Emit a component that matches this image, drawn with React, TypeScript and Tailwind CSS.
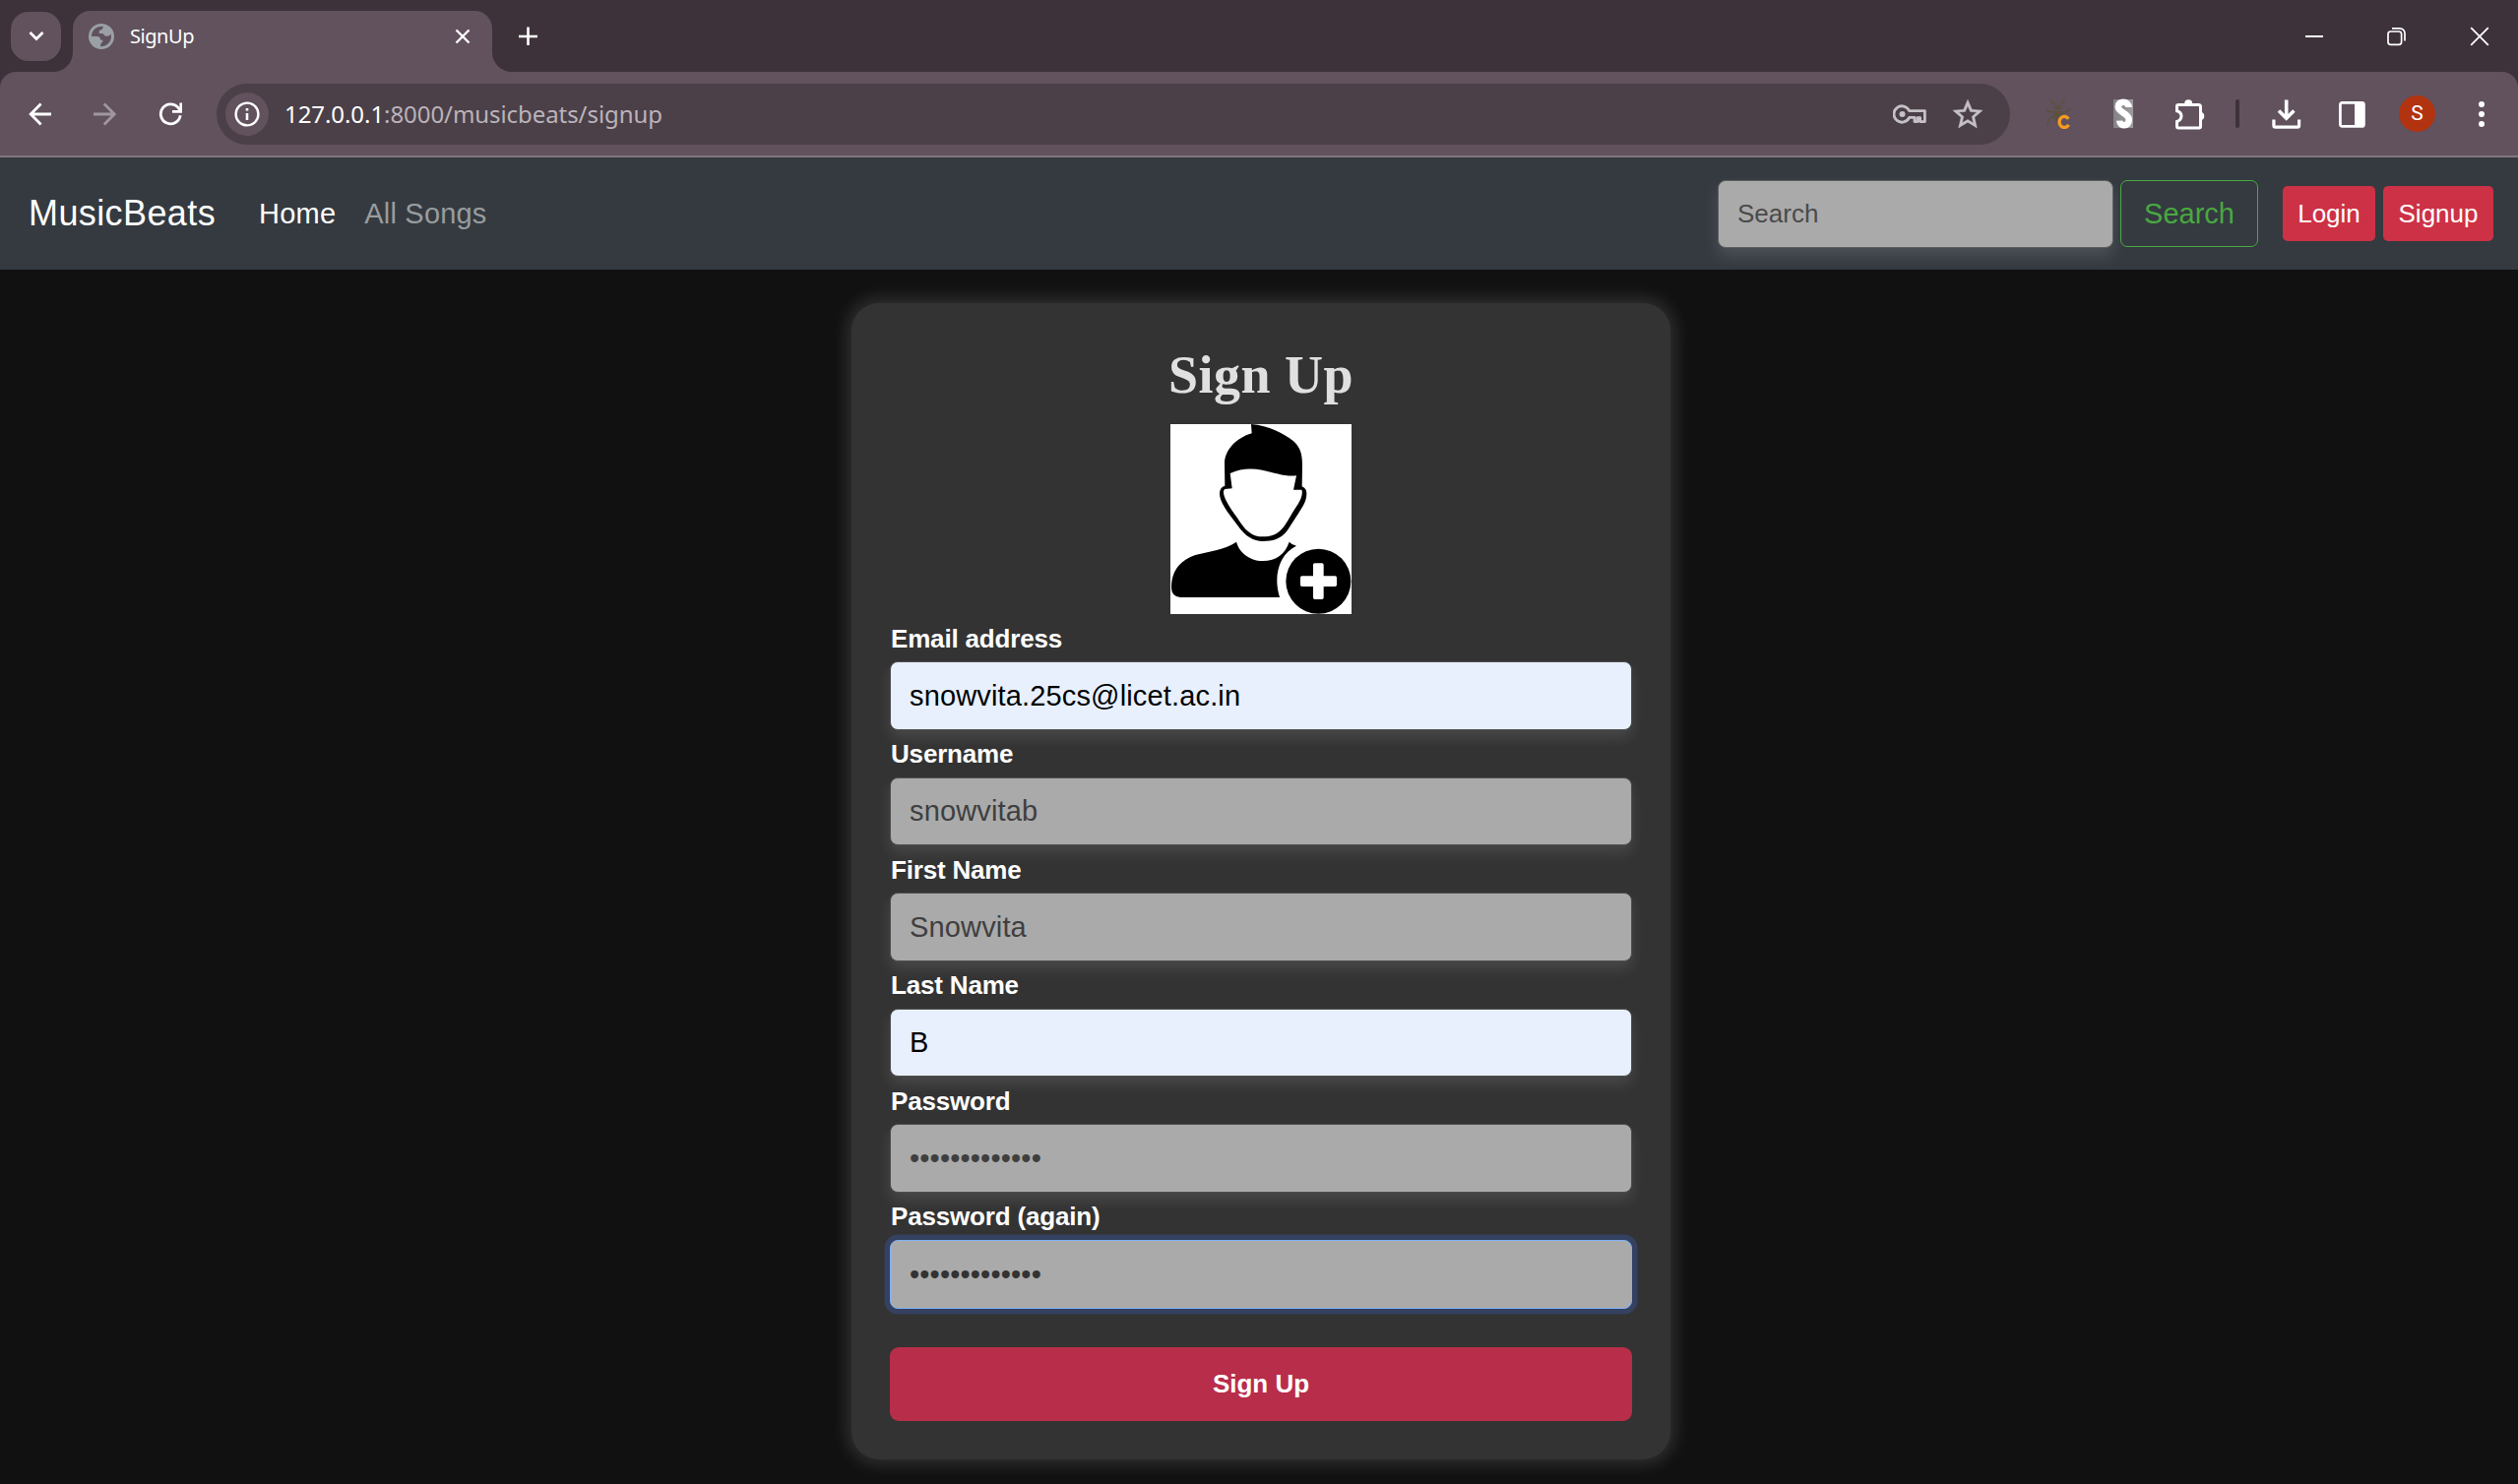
import React from "react";

function Globe() {
  return (
    <svg className="h-[26px] w-[26px]" viewBox="0 0 26 26">
      <circle cx="13" cy="13" r="13" fill="#9aa0a6" />
      <path
        d="M14.8 2.8 C9.4 2.2 4.6 5.4 3.2 10.4 L3 13 L8.8 13 C11 13 12 14.2 12 16.6 L14.4 16.8 C14.6 18.6 13.6 19.8 12.6 20 L12 23.2 C18 23.4 23 18.8 23 13 L22.4 10.4 C21.6 12.4 19 13.2 17.6 12.4 C15.6 12.6 15.4 10.4 15 10.2 L10.8 10 L10.8 8 C11 6.4 12.4 6.2 14 6 Z"
        fill="#61525e"
      />
    </svg>
  );
}

function TabStrip() {
  return (
    <div className="flex h-[73px] w-full items-start bg-[#3d3239]">
      <div className="mt-3 ml-[11px] flex h-[50px] w-[51px] items-center justify-center rounded-[18px] bg-[#61525e]">
        <svg className="h-4 w-4" viewBox="0 0 16 16" fill="none" stroke="#fff" strokeWidth="2.8">
          <path d="M1.5 4 L8 10.5 L14.5 4" />
        </svg>
      </div>
      <div className="relative mt-[11px] ml-3 flex h-[62px] w-[426px] items-center rounded-t-[18px] bg-[#61525e] pb-[10px]">
        <svg className="absolute bottom-0 -left-5 h-5 w-5" viewBox="0 0 20 20">
          <path d="M20 0 V20 H0 A20 20 0 0 0 20 0Z" fill="#61525e" />
        </svg>
        <svg className="absolute -right-5 bottom-0 h-5 w-5" viewBox="0 0 20 20">
          <path d="M0 0 V20 H20 A20 20 0 0 1 0 0Z" fill="#61525e" />
        </svg>
        <div className="ml-4">
          <Globe />
        </div>
        <span className="ml-4 text-[20px] leading-6 tracking-[-0.45px] text-white">SignUp</span>
        <svg className="mr-[22px] ml-auto h-4 w-4" viewBox="0 0 16 16" stroke="#fff" strokeWidth="2.4">
          <path d="M1.5 1.5 L14.5 14.5 M14.5 1.5 L1.5 14.5" />
        </svg>
      </div>
      <svg className="mt-[27px] ml-[27px] h-5 w-5" viewBox="0 0 20 20" stroke="#fff" strokeWidth="2.6">
        <path d="M9.5 .5 V19 M0 10 H19" />
      </svg>
      <div className="mt-[27px] mr-[29px] ml-auto flex items-center">
        <svg className="h-5 w-5" viewBox="0 0 20 20" stroke="#fff" strokeWidth="2">
          <path d="M1 10 H19" />
        </svg>
        <svg className="ml-[64px] h-5 w-5" viewBox="0 0 20 20" fill="none" stroke="#fff" strokeWidth="1.7">
          <rect x="1" y="5" width="13.6" height="13.4" rx="2.6" />
          <path d="M5 1.9 H13 A5 5 0 0 1 18 7 V14.5" />
        </svg>
        <svg className="ml-[64px] h-5 w-5" viewBox="0 0 20 20" stroke="#fff" strokeWidth="1.7">
          <path d="M1.2 1.2 L18.8 18.8 M18.8 1.2 L1.2 18.8" />
        </svg>
      </div>
    </div>
  );
}

function Toolbar() {
  return (
    <div className="w-full bg-[#3d3239]">
      <div className="flex h-[87px] w-full items-center rounded-t-[16px] border-b-2 border-[#83767f] bg-[#61525e]">
        <svg className="ml-[29px] h-6 w-6" viewBox="0 0 24 24" fill="none" stroke="#fff" strokeWidth="2.8">
          <path d="M23 12 H2.5 M12.6 1.6 L2.2 12 L12.6 22.4" />
        </svg>
        <svg className="ml-[42px] h-6 w-6" viewBox="0 0 24 24" fill="none" stroke="#a0979e" strokeWidth="2.8">
          <path d="M0 12 H20.5 M10.8 1.6 L21.2 12 L10.8 22.4" />
        </svg>
        <svg className="ml-[42px] h-6 w-6" viewBox="0 0 24 24" fill="none" stroke="#fff" strokeWidth="2.8">
          <path d="M22.2 13.2 A10 10 0 1 1 20 5.4 L22 8.2" />
          <path d="M22.8 .6 V9.4 H14" />
        </svg>
        <div className="ml-[35px] flex h-[62px] w-[1822px] items-center rounded-full bg-[#4b4048]">
          <div className="ml-[9px] flex h-11 w-11 items-center justify-center rounded-full bg-[#61525e]">
            <svg className="h-[26px] w-[26px]" viewBox="0 0 26 26">
              <circle cx="13" cy="13" r="11.4" fill="none" stroke="#fff" strokeWidth="2.4" />
              <path d="M13 12 V19" stroke="#fff" strokeWidth="2.6" />
              <path d="M13 7 V9.6" stroke="#fff" strokeWidth="2.6" />
            </svg>
          </div>
          <span className="ml-4 text-[24px] leading-8 tracking-[-0.07px] text-[#bbb3ba]">
            <span className="text-white">127.0.0.1</span>:8000/musicbeats/signup
          </span>
          <svg className="ml-auto h-5 w-[34px]" viewBox="0 0 34 20" fill="none" stroke="#c5c1c4" strokeWidth="2.8">
            <path
              d="M16.6 6.6 H32.4 V17.6 H27.6 V13.6 H25 V17.6 H22 V13.4 H16.6 A8.2 8.2 0 1 1 16.6 6.6Z"
              strokeLinejoin="round"
            />
            <circle cx="9.5" cy="10" r="3" fill="#c5c1c4" stroke="none" />
          </svg>
          <svg className="mr-[27px] ml-[26px] h-[32px] w-[32px]" viewBox="1.4 1.2 21.2 21.2" fill="#c5c1c4">
            <path
              d="M22 9.24l-7.19-.62L12 2 9.19 8.63 2 9.24l5.46 4.73L5.82 21 12 17.27 18.18 21l-1.63-7.03L22 9.24zM12 15.4l-3.76 2.27 1-4.28-3.32-2.88 4.38-.38L12 6.1l1.71 4.04 4.38.38-3.32 2.88 1 4.28L12 15.4z"
              stroke="#c5c1c4"
              strokeWidth="0.3"
            />
          </svg>
        </div>
        <svg className="ml-[36px] h-[30px] w-[26px]" viewBox="0 0 26 30" fill="none" stroke="#5c5140" strokeWidth="1.8">
          <path d="M5 1 L9.5 5.5 M20 1 L15.5 5.5 M1.5 8.5 C1.5 12.5 4 12.8 7 12.8 H18 C21 12.8 24.5 12.5 24.5 8.5 M8 17 C3.5 18.5 2 21 2 27" />
          <path
            d="M8 10.5 C8 4.5 17 4.5 17 10.5Z M8 14 H17.5 V16 L12.5 18 L11.5 25 Q9.5 20 8 18Z"
            fill="#5c5140"
            stroke="none"
          />
          <path d="M23.2 19.8 A5 5.6 0 1 0 23.4 25.8" stroke="#f79a1e" strokeWidth="3.4" />
        </svg>
        <div className="ml-[43px] flex h-[29px] w-5 items-center justify-center bg-linear-to-r from-[#868386] to-[#9d9b9d]">
          <svg className="h-[29px] w-5 overflow-visible" viewBox="0 0 20 29" fill="none" stroke="#fff">
            <path
              d="M15.6 8 C15.4 1.2 4.8 1 4.8 7.6 C4.8 13.6 15.8 13.8 15.8 20.8 C15.8 28 6.6 28 6.2 21.6"
              strokeWidth="6.6"
            />
          </svg>
        </div>
        <svg className="ml-[42px] h-[32px] w-[32px]" viewBox="0 0 32 32" fill="none" stroke="#fff" strokeWidth="3">
          <path d="M4 6.5 H24.5 Q26.5 6.5 26.5 8.5 V28.5 Q26.5 30 25 30 H4 Q2.5 30 2.5 28.5 V23.5 Q7 22 7 18 Q7 14 2.5 12.8 V8 Q2.5 6.5 4 6.5Z" />
          <path d="M10.2 5.5 A4 4.2 0 0 1 18.2 5.5Z M27.5 14 A4 4.2 0 0 1 27.5 22Z" fill="#fff" stroke="none" />
        </svg>
        <div className="ml-[30px] h-[29px] w-1 rounded-full bg-[#3d3239]" />
        <svg className="ml-[33px] h-[30px] w-[30px]" viewBox="0 0 30 30" fill="none" stroke="#fff" strokeWidth="3.6">
          <path d="M14.7 .5 V19 M7 11.6 L14.7 19.3 L22.4 11.6" />
          <path d="M1.9 20.5 V26.5 Q1.9 28.2 3.6 28.2 H26 Q27.6 28.2 27.6 26.5 V20.5" strokeWidth="3.2" />
        </svg>
        <svg className="ml-[38px] h-[28px] w-[27px]" viewBox="0 0 27 28">
          <rect x="1.4" y="2.4" width="24" height="24" rx="2" fill="none" stroke="#fff" strokeWidth="2.8" />
          <path d="M16 2 H26 V26.4 H16Z" fill="#fff" />
        </svg>
        <div className="ml-[34px] flex h-[37px] w-[37px] items-center justify-center rounded-full bg-[#b1330f]">
          <span className="font-[Roboto,sans-serif] text-[21px] leading-none text-white">S</span>
        </div>
        <div className="mr-[34px] ml-auto flex flex-col gap-1">
          <div className="h-1.5 w-1.5 rounded-full bg-white" />
          <div className="h-1.5 w-1.5 rounded-full bg-white" />
          <div className="h-1.5 w-1.5 rounded-full bg-white" />
        </div>
      </div>
    </div>
  );
}

function Navbar() {
  return (
    <nav className="flex h-[114px] w-full items-center bg-[#343a40] font-['Liberation_Sans',Arial,sans-serif]">
      <span className="ml-[29px] text-[36px] leading-[54px] tracking-[0.4px] text-white">MusicBeats</span>
      <span className="ml-[44px] pt-0.5 text-[29px] tracking-[0.2px] text-white">Home</span>
      <span className="ml-[29px] pt-0.5 text-[29px] tracking-[0.2px] text-[#999c9f]">All Songs</span>
      <div className="ml-auto flex h-[69px] w-[402px] items-center rounded-[8px] border border-[#5c5f62] bg-[#aaa] pt-px pl-[19px] text-[26px] text-[#4a4a4a] shadow-[0_8px_16px_rgba(255,255,255,0.12)]">
        Search
      </div>
      <div className="ml-[7px] flex h-[68px] w-[140px] items-center justify-center rounded-[7px] border-[1.5px] border-[#4aa840] pt-px text-[29px] text-[#4aa840]">
        Search
      </div>
      <div className="ml-[25px] flex h-[56px] w-[94px] items-center justify-center rounded-[5px] bg-[#cd3145] text-[26px] text-white">
        Login
      </div>
      <div className="mr-[25px] ml-2 flex h-[56px] w-[112px] items-center justify-center rounded-[5px] bg-[#cd3145] text-[26px] text-white">
        Signup
      </div>
    </nav>
  );
}

function Avatar() {
  return (
    <svg className="block h-[193px] w-[184px] bg-white" viewBox="0 0 552 579">
      <path d="M246 0 C300 4 345 28 375 52 C395 70 402 90 402 125 L401 190 Q416 196 415 214 C414 240 400 255 390 272 L356 325 C335 352 310 357 282 357 C254 357 234 344 214 321 L174 268 C163 250 151 233 150 212 Q150 192 166 188 L165 120 C165 80 200 42 248 28Z" />
      <path
        d="M182 150 C215 134 248 134 280 140 C320 148 350 161 384 157 L375 200 H400 Q404 208 398 226 C390 245 376 262 365 282 C345 316 330 343 282 343 C240 343 222 314 204 286 C190 266 174 246 165 222 Q158 204 166 198 L188 196Z"
        fill="#fff"
      />
      <path d="M201 359 C212 396 245 417 282 417 C322 417 350 396 362 359 Q372 369 384 371 C330 396 313 465 333 528 H30 Q2 526 3 496 C5 440 35 414 76 399 C120 387 165 383 201 359Z" />
      <circle cx="451" cy="479" r="99" />
      <path
        d="M440 424 H462 Q467 424 467 429 V463 H502 Q507 463 507 468 V490 Q507 495 502 495 H467 V529 Q467 534 462 534 H440 Q435 534 435 529 V495 H401 Q396 495 396 490 V468 Q396 463 401 463 H435 V429 Q435 424 440 424Z"
        fill="#fff"
      />
    </svg>
  );
}

const plain = "border-[#4e4e4e] bg-[#aaa] text-[#3f3f3f]";
const filled = "border-[#4e4e4e] bg-[#e8f0fe] text-black";
const base =
  "flex h-[69.5px] items-center rounded-[8px] border pt-px pl-[19px] text-[29px] leading-none tracking-[0.15px] shadow-[0_8px_14px_rgba(255,255,255,0.1)]";
const labelStyle = "h-[39px] pt-[0.6px] pl-px text-[26px] leading-[30px] font-bold tracking-[-0.18px] text-white";

const fields = [
  { label: "Email address", value: "snowvita.25cs@licet.ac.in", look: filled },
  { label: "Username", value: "snowvitab", look: plain },
  { label: "First Name", value: "Snowvita", look: plain },
  { label: "Last Name", value: "B", look: filled },
  { label: "Password", value: "•••••••••••••", look: plain },
];

function SignUpCard() {
  return (
    <div className="mt-[34px] ml-[865px] flex h-[1175px] w-[832px] flex-col rounded-[28px] bg-[#333] px-[39px] font-['Liberation_Sans',Arial,sans-serif] shadow-[0_0_18px_4px_rgba(255,255,255,0.15)]">
      <h1 className="mt-[42px] text-center font-['Liberation_Serif',serif] text-[54px] leading-[62px] font-bold tracking-[0.5px] text-[#e0e0e0]">
        Sign Up
      </h1>
      <div className="mt-[19px] flex justify-center">
        <Avatar />
      </div>
      <div className="mt-[9px] flex flex-col">
        {fields.map((f) => (
          <div key={f.label} className="h-[117.5px]">
            <div className={labelStyle}>{f.label}</div>
            <div className={`${base} ${f.look}`}>{f.value}</div>
          </div>
        ))}
        <div className={labelStyle}>Password (again)</div>
        <div className="flex h-[70px] items-center rounded-[8px] border-[1.5px] border-[#80b0f5] bg-[#aaa] pt-px pl-[19px] text-[29px] leading-none tracking-[0.15px] text-[#333] shadow-[0_0_0_5.5px_#344160]">
          •••••••••••••
        </div>
      </div>
      <div className="mt-[39.5px] flex h-[75px] items-center justify-center rounded-[9px] bg-[#b82d49] text-[26px] font-bold text-white">
        Sign Up
      </div>
    </div>
  );
}

export default function App() {
  return (
    <div className="h-[1508px] w-[2558px] overflow-hidden bg-[#111] font-['Noto_Sans','Open_Sans',sans-serif]">
      <TabStrip />
      <Toolbar />
      <Navbar />
      <SignUpCard />
    </div>
  );
}
